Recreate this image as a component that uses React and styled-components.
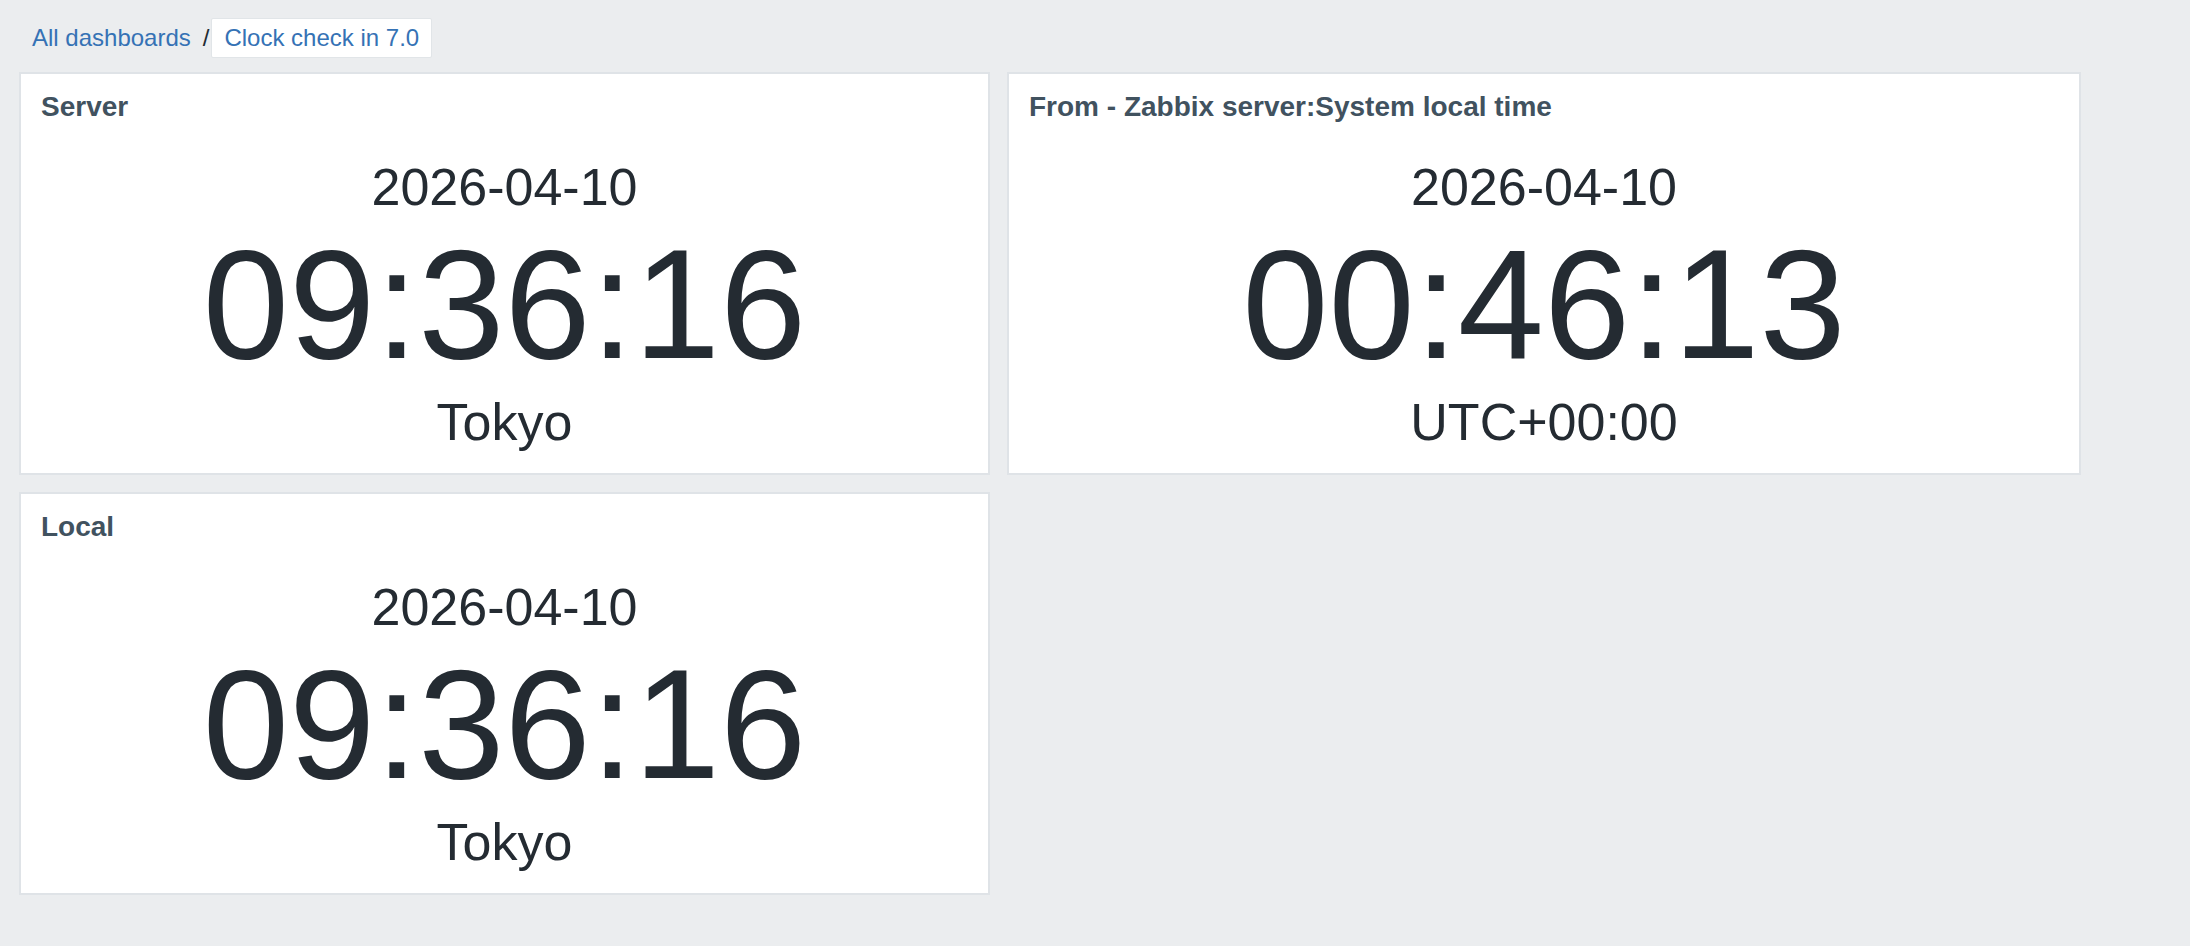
import React from 'react';
import styled, { createGlobalStyle } from 'styled-components';

const GlobalStyle = createGlobalStyle`
  html, body {
    margin: 0;
    padding: 0;
    background: #ebedef;
    font-family: "Liberation Sans", Arial, sans-serif;
  }
`;

const Page = styled.div`
  min-height: 946px;
  background: #ebedef;
`;

const Breadcrumbs = styled.nav`
  display: flex;
  align-items: center;
  height: 40px;
  padding: 18px 0 0 32px;
  font-size: 24px;
`;

const Crumb = styled.a`
  color: #3572b5;
  text-decoration: none;
  line-height: 28px;
`;

const Separator = styled.span`
  color: #1f2c33;
  margin: 0 2px 0 12px;
`;

const CurrentCrumb = styled.div`
  display: flex;
  align-items: center;
  height: 38px;
  padding: 0 12px;
  background: #ffffff;
  border: 1px solid #e1e5e8;
  border-radius: 2px;
  color: #3572b5;
`;

const Dashboard = styled.div`
  display: grid;
  grid-template-columns: 971px 1074px;
  grid-auto-rows: 403px;
  column-gap: 17px;
  row-gap: 17px;
  padding: 14px 0 0 19px;
`;

const Widget = styled.section`
  display: flex;
  flex-direction: column;
  box-sizing: border-box;
  background: #ffffff;
  border: 2px solid #dfe3e7;
  color: #242b32;
`;

const WidgetHeader = styled.h4`
  margin: 0;
  padding: 17px 20px 0;
  font-size: 28px;
  line-height: 32px;
  font-weight: bold;
  color: #41525f;
`;

const ClockBody = styled.div`
  display: flex;
  flex-direction: column;
  align-items: center;
  padding-top: 39px;
`;

const DateLine = styled.div`
  font-size: 52px;
  line-height: 50px;
  margin-bottom: 15px;
`;

const TimeLine = styled.div`
  font-size: 155px;
  line-height: 155px;
  margin-bottom: 14px;
`;

const ZoneLine = styled.div`
  font-size: 52px;
  line-height: 52px;
`;

const clocks = [
  { title: 'Server', date: '2026-04-10', time: '09:36:16', zone: 'Tokyo' },
  { title: 'From - Zabbix server:System local time', date: '2026-04-10', time: '00:46:13', zone: 'UTC+00:00' },
  { title: 'Local', date: '2026-04-10', time: '09:36:16', zone: 'Tokyo' },
];

const ClockWidget = ({ title, date, time, zone }) => (
  <Widget>
    <WidgetHeader>{title}</WidgetHeader>
    <ClockBody>
      <DateLine>{date}</DateLine>
      <TimeLine>{time}</TimeLine>
      <ZoneLine>{zone}</ZoneLine>
    </ClockBody>
  </Widget>
);

export default function App() {
  return (
    <Page>
      <GlobalStyle />
      <Breadcrumbs>
        <Crumb href="#">All dashboards</Crumb>
        <Separator>/</Separator>
        <CurrentCrumb>Clock check in 7.0</CurrentCrumb>
      </Breadcrumbs>
      <Dashboard>
        {clocks.map((c, i) => (
          <ClockWidget key={i} {...c} />
        ))}
      </Dashboard>
    </Page>
  );
}
